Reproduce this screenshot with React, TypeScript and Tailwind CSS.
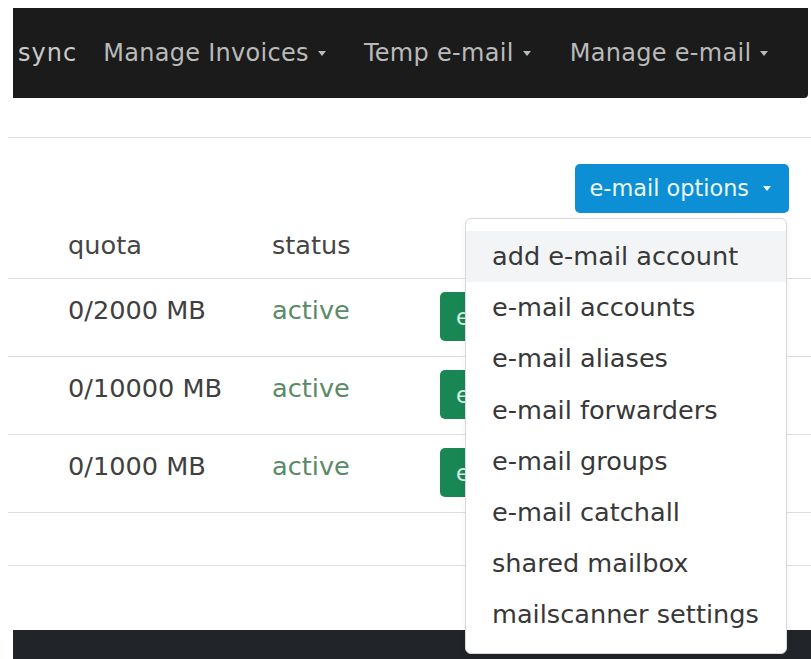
import React from "react";

const navItems = [
  { label: "Manage Invoices", gap: "ml-[26px]" },
  { label: "Temp e-mail", gap: "ml-[38px]" },
  { label: "Manage e-mail", gap: "ml-[39px]" },
];

const rows = [
  { quota: "0/2000 MB", status: "active" },
  { quota: "0/10000 MB", status: "active" },
  { quota: "0/1000 MB", status: "active" },
];

const menu = [
  "add e-mail account",
  "e-mail accounts",
  "e-mail aliases",
  "e-mail forwarders",
  "e-mail groups",
  "e-mail catchall",
  "shared mailbox",
  "mailscanner settings",
];

function Caret({ className }: { className?: string }) {
  return (
    <span
      className={
        "inline-block w-0 h-0 border-t-[5px] border-x-[4px] border-x-transparent align-middle " +
        (className ?? "")
      }
    />
  );
}

export default function App() {
  return (
    <div className="relative w-[811px] h-[659px] overflow-hidden bg-white font-['DejaVu_Sans',sans-serif]">
      {/* top navigation */}
      <div className="pt-2 pl-[13px] pr-[3px]">
        <nav className="flex h-[90px] items-center rounded-br-[4px] bg-[#1b1b1b] pl-[5px] text-[24px] tracking-[0.3px] text-[#bababa]">
          <span className="tracking-[1px] text-[#c9c9c9]">sync</span>
          {navItems.map((item) => (
            <span key={item.label} className={"flex items-center " + item.gap}>
              {item.label}
              <Caret className="ml-[9px] border-t-[#bababa]" />
            </span>
          ))}
        </nav>
      </div>

      {/* account card */}
      <div className="mt-[39px] ml-2 border-y border-[#dedede]">
        <div className="flex justify-end pt-[26px] pr-[22px]">
          <button className="flex h-[49px] items-center rounded-[5px] bg-[#0c8fd4] pl-[15px] pr-[18px] text-[22.4px] text-[#eef7fc]">
            e-mail options
            <Caret className="ml-[14px] border-t-[#eef7fc]" />
          </button>
        </div>

        <div className="text-[25.6px] leading-[38px]">
          <div className="flex h-[66px] border-b border-[#dedede] pl-[60px] pt-[13px] text-[#454545]">
            <div className="w-[204px]">quota</div>
            <div className="w-[168px]">status</div>
          </div>
          {rows.map((r) => (
            <div key={r.quota} className="flex h-[78px] items-start border-b border-[#dedede] pl-[60px]">
              <div className="w-[204px] pt-[12px] text-[#404040]">{r.quota}</div>
              <div className="w-[168px] pt-[12px] text-[#5a8a66]">{r.status}</div>
              <div className="mt-[13px] flex h-[49px] items-center rounded-[5px] bg-[#198754] px-[16px] text-[22.4px] text-[#d9efe3]">
                edit
              </div>
            </div>
          ))}
          <div className="h-[52px]" />
        </div>
      </div>

      {/* footer */}
      <div className="mt-[64px] ml-[13px] h-[40px] bg-[#212529]" />

      {/* open dropdown menu */}
      <div className="absolute left-[465px] top-[218px] w-[322px] rounded-[6px] border border-[#d9d9d9] bg-white py-[12px] shadow-[0_2px_6px_rgba(0,0,0,0.06)]">
        {menu.map((m, i) => (
          <div
            key={m}
            className={
              "h-[51.2px] px-[26px] text-[25.6px] leading-[51px] text-[#383838] " +
              (i === 0 ? "bg-[#f3f4f5]" : "")
            }
          >
            {m}
          </div>
        ))}
      </div>
    </div>
  );
}
